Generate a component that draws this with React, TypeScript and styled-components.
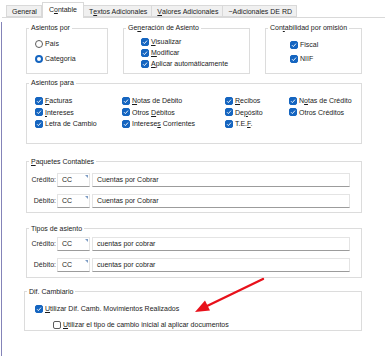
import styled, { createGlobalStyle } from "styled-components";
import { ReactNode } from "react";

const GlobalStyle = createGlobalStyle`
    html, body {
        margin: 0;
        padding: 0;
        background: #ffffff;
    }
    body {
        font-family: "Liberation Sans", Arial, sans-serif;
    }
`;

const Window = styled.div`
    position: relative;
    width: 385px;
    height: 356px;
    overflow: hidden;
    background: #ffffff;
    color: #1b1b1b;
    font-size: 7px;
    display: flex;
    flex-direction: column;
`;

const TabStrip = styled.div`
    display: flex;
    align-items: flex-end;
    height: 17px;
    padding-left: 6px;
    box-sizing: border-box;
`;

const Tab = styled.div<{ $active?: boolean }>`
    position: relative;
    z-index: ${(p) => (p.$active ? 1 : 0)};
    display: flex;
    align-items: center;
    box-sizing: border-box;
    height: ${(p) => (p.$active ? "16px" : "12px")};
    margin-bottom: ${(p) => (p.$active ? "-1px" : "0")};
    padding: ${(p) => (p.$active ? "0 6px 2px 6px" : "0 4px 0 5px")};
    background: ${(p) => (p.$active ? "#ffffff" : "#f0f0f0")};
    border: 1px solid #d9d9d9;
    border-bottom: ${(p) => (p.$active ? "none" : "1px solid #d9d9d9")};
    border-left: ${(p) => (p.$active ? "1px solid #d9d9d9" : "none")};
    white-space: nowrap;

    &:first-child {
        border-left: 1px solid #d9d9d9;
    }
`;

const Key = styled.span`
    text-decoration: underline;
    text-underline-offset: 1px;
`;

const Body = styled.div`
    flex: 1;
    display: flex;
`;

const EdgeLine = styled.div`
    width: 1px;
    margin: 5px 0 0 1px;
    background: #8484b8;
`;

const Panel = styled.div`
    flex: 1;
    border-top: 1px solid #d9d9d9;
    padding: 6px 0 0 24px;
    display: flex;
    flex-direction: column;
    align-items: flex-start;
`;

const Group = styled.fieldset<{ $w?: number; $mt?: number; $ml?: number }>`
    margin: ${(p) => p.$mt ?? 0}px 0 0 ${(p) => p.$ml ?? 0}px;
    padding: 0;
    min-width: 0;
    width: ${(p) => p.$w ?? 336}px;
    box-sizing: border-box;
    border: 1px solid #dcdcdc;
`;

const Legend = styled.legend`
    margin-left: 2px;
    padding: 0 2px;
    font-size: 7px;
    line-height: 8px;
    white-space: nowrap;
`;

const TopRow = styled.div`
    display: flex;
    gap: 15px;
    height: 50px;

    & > fieldset {
        height: 100%;
    }
`;

const Stack = styled.div<{ $pt: number; $pl: number; $gap: number }>`
    display: flex;
    flex-direction: column;
    gap: ${(p) => p.$gap}px;
    padding: ${(p) => p.$pt}px 0 0 ${(p) => p.$pl}px;
`;

const Option = styled.div<{ $indent?: number }>`
    display: flex;
    align-items: center;
    gap: 2px;
    height: 11px;
    padding-left: ${(p) => p.$indent ?? 0}px;
    white-space: nowrap;
`;

const Box = styled.span<{ $checked?: boolean }>`
    flex: none;
    width: 8px;
    height: 8px;
    box-sizing: border-box;
    border-radius: 2px;
    display: flex;
    align-items: center;
    justify-content: center;
    background: ${(p) => (p.$checked ? "#1565c0" : "#ffffff")};
    border: 1px solid ${(p) => (p.$checked ? "#1565c0" : "#5c5c5c")};
`;

const Radio = styled.span<{ $checked?: boolean }>`
    flex: none;
    width: 8px;
    height: 8px;
    box-sizing: border-box;
    border-radius: 50%;
    background: #ffffff;
    border: ${(p) => (p.$checked ? "2.5px solid #1565c0" : "1px solid #5c5c5c")};
`;

const Grid = styled.div`
    display: grid;
    grid-template-columns: 87px 103px 64px 1fr;
    grid-auto-rows: 11.5px;
    align-items: center;
    padding: 8px 0 13px 8px;
`;

const Fields = styled.div<{ $pt: number; $pb: number }>`
    display: flex;
    flex-direction: column;
    gap: 7px;
    padding: ${(p) => p.$pt}px 11px ${(p) => p.$pb}px 1px;
`;

const FieldRow = styled.div`
    display: flex;
    align-items: center;
`;

const FieldLabel = styled.span`
    width: 28px;
    margin-right: 1px;
    text-align: right;
    color: #2a2a2a;
    white-space: nowrap;
`;

const Input = styled.div<{ $code?: boolean }>`
    position: relative;
    box-sizing: border-box;
    height: 14px;
    display: flex;
    align-items: center;
    padding-left: 4px;
    background: #ffffff;
    border: 1px solid #e4e4e4;
    border-bottom-color: #9c9c9c;
    width: ${(p) => (p.$code ? "33px" : "auto")};
    flex: ${(p) => (p.$code ? "none" : "1")};
    margin-right: ${(p) => (p.$code ? "2px" : "0")};
    white-space: nowrap;

    ${(p) =>
        p.$code &&
        `&::after {
            content: "";
            position: absolute;
            top: 1px;
            right: 1px;
            border-top: 3px solid #7d9cc4;
            border-left: 3px solid transparent;
        }`}
`;

const ArrowLayer = styled.svg`
    position: absolute;
    left: 0;
    top: 0;
    pointer-events: none;
`;

const Check = ({ label, checked = true, indent }: { label: ReactNode; checked?: boolean; indent?: number }) => (
    <Option $indent={indent}>
        <Box $checked={checked}>
            {checked && (
                <svg width="6" height="6" viewBox="0 0 6 6">
                    <polyline points="1,3.2 2.4,4.6 5,1.6" fill="none" stroke="#ffffff" strokeWidth="0.9" />
                </svg>
            )}
        </Box>
        <span>{label}</span>
    </Option>
);

const RadioOption = ({ label, checked }: { label: ReactNode; checked?: boolean }) => (
    <Option>
        <Radio $checked={checked} />
        <span>{label}</span>
    </Option>
);

const AccountRow = ({ label, code, text }: { label: string; code: string; text: string }) => (
    <FieldRow>
        <FieldLabel>{label}</FieldLabel>
        <Input $code>{code}</Input>
        <Input>{text}</Input>
    </FieldRow>
);

export default function App() {
    return (
        <Window>
            <GlobalStyle />
            <TabStrip>
                <Tab>General</Tab>
                <Tab $active>
                    C<Key>o</Key>ntable
                </Tab>
                <Tab>
                    T<Key>e</Key>xtos Adicionales
                </Tab>
                <Tab>
                    <Key>V</Key>alores Adicionales
                </Tab>
                <Tab>~Adicionales DE RD</Tab>
            </TabStrip>

            <Body>
                <EdgeLine />
                <Panel>
                    <TopRow>
                        <Group $w={82}>
                            <Legend>Asientos por</Legend>
                            <Stack $pt={6} $pl={8} $gap={4}>
                                <RadioOption label="País" />
                                <RadioOption label="Categoría" checked />
                            </Stack>
                        </Group>
                        <Group $w={127}>
                            <Legend>
                                Ge<Key>n</Key>eración de Asiento
                            </Legend>
                            <Stack $pt={4} $pl={17} $gap={0}>
                                <Check label={<><Key>V</Key>isualizar</>} />
                                <Check label={<><Key>M</Key>odificar</>} />
                                <Check label={<><Key>A</Key>plicar automáticamente</>} />
                            </Stack>
                        </Group>
                        <Group $w={97}>
                            <Legend>
                                Con<Key>t</Key>abilidad por omisión
                            </Legend>
                            <Stack $pt={7} $pl={24} $gap={3}>
                                <Check label="Fiscal" />
                                <Check label="NIIF" />
                            </Stack>
                        </Group>
                    </TopRow>

                    <Group $mt={5}>
                        <Legend>Asientos para</Legend>
                        <Grid>
                            <Check label={<><Key>F</Key>acturas</>} />
                            <Check label={<><Key>N</Key>otas de Débito</>} />
                            <Check label={<><Key>R</Key>ecibos</>} />
                            <Check label={<>N<Key>o</Key>tas de Crédito</>} />
                            <Check label={<><Key>I</Key>ntereses</>} />
                            <Check label={<>Otros <Key>D</Key>ébitos</>} />
                            <Check label={<>De<Key>p</Key>ósito</>} />
                            <Check label="Otros Créditos" />
                            <Check label="Letra de Cambio" />
                            <Check label={<>Interese<Key>s</Key> Corrientes</>} />
                            <Check label={<>T.E.<Key>F</Key>.</>} />
                        </Grid>
                    </Group>

                    <Group $mt={14}>
                        <Legend>
                            <Key>P</Key>aquetes Contables
                        </Legend>
                        <Fields $pt={7} $pb={4}>
                            <AccountRow label="Crédito:" code="CC" text="Cuentas por Cobrar" />
                            <AccountRow label="Débito:" code="CC" text="Cuentas por Cobrar" />
                        </Fields>
                    </Group>

                    <Group $mt={12}>
                        <Legend>Tipos de asiento</Legend>
                        <Fields $pt={4} $pb={5}>
                            <AccountRow label="Crédito:" code="CC" text="cuentas por cobrar" />
                            <AccountRow label="Débito:" code="CC" text="cuentas por cobrar" />
                        </Fields>
                    </Group>

                    <Group $mt={10} $ml={-2} $w={338}>
                        <Legend>Dif. Cambiario</Legend>
                        <Stack $pt={7.5} $pl={10} $gap={5}>
                            <Check label={<><Key>U</Key>tilizar Dif. Camb. Movimientos Realizados</>} />
                            <Check
                                indent={18}
                                checked={false}
                                label={<><Key>U</Key>tilizar el tipo de cambio inicial al aplicar documentos</>}
                            />
                        </Stack>
                    </Group>
                </Panel>
            </Body>

            <ArrowLayer width="385" height="356" viewBox="0 0 385 356">
                <line x1="263" y1="279" x2="206" y2="306.5" stroke="#e8111b" strokeWidth="2.4" strokeLinecap="round" />
                <polygon points="195,312 210,310.5 205,300.5" fill="#e8111b" />
            </ArrowLayer>
        </Window>
    );
}
